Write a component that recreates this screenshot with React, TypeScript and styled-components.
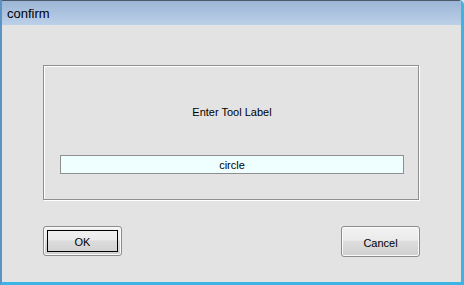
import styled, { createGlobalStyle } from 'styled-components'

const GlobalStyle = createGlobalStyle`
  html, body {
    margin: 0;
    padding: 0;
    background: #e3e3e3;
  }
  body {
    font-family: 'Liberation Sans', Arial, sans-serif;
  }
`

const App = () => {
  return (
    <>
      <GlobalStyle />
      <Window>
        <TitleBar>confirm</TitleBar>
        <Body>
          <Panel>
            <Prompt>Enter Tool Label</Prompt>
            <LabelInput defaultValue='circle' />
          </Panel>
          <ButtonRow>
            <DialogButton $default>
              <FocusRing>OK</FocusRing>
            </DialogButton>
            <DialogButton>
              <FocusRing>Cancel</FocusRing>
            </DialogButton>
          </ButtonRow>
        </Body>
      </Window>
    </>
  )
}

const Window = styled.div`
  width: 464px;
  height: 285px;
  box-sizing: border-box;
  display: flex;
  flex-direction: column;
  background: #e3e3e3;
  border-style: solid;
  border-width: 0 3px 3px 2px;
  border-color: #3cb4e4 #3cb4e4 #3cb4e4 #5b93c4;
  border-top-right-radius: 5px;
  overflow: hidden;
`

const TitleBar = styled.div`
  height: 25px;
  box-sizing: border-box;
  display: flex;
  align-items: center;
  padding: 1px 0 0 5px;
  border-top: 1px solid #4a5868;
  background: linear-gradient(to bottom, #9db6d6 0%, #b2c8e3 70%, #bcd0e8 100%);
  color: #000;
  font-size: 13px;
`

const Body = styled.div`
  flex: 1;
  display: flex;
  flex-direction: column;
  padding: 40px 42px 0 41px;
`

const Panel = styled.div`
  height: 135px;
  box-sizing: border-box;
  display: flex;
  flex-direction: column;
  align-items: flex-start;
  padding: 39px 14px 0 16px;
  border: 1px solid #8f8f8f;
  box-shadow: 1px 1px 0 #ffffff, inset 1px 1px 0 #ffffff;
`

const Prompt = styled.div`
  align-self: stretch;
  text-align: center;
  font-size: 11px;
  line-height: 14px;
  color: #000;
`

const LabelInput = styled.input`
  width: 344px;
  height: 19px;
  box-sizing: border-box;
  margin-top: 36px;
  padding: 1px 0 0;
  border: 1px solid #8f8f8f;
  background: #efffff;
  text-align: center;
  font-family: 'Liberation Sans', Arial, sans-serif;
  font-size: 11px;
  color: #000;
  outline: none;
`

const ButtonRow = styled.div`
  display: flex;
  justify-content: space-between;
  align-items: flex-start;
  margin-top: 26px;
  margin-right: -1px;
`

const DialogButton = styled.button<{ $default?: boolean }>`
  width: ${(p) => (p.$default ? '79px' : '79px')};
  height: ${(p) => (p.$default ? '30px' : '31px')};
  box-sizing: border-box;
  padding: 3px;
  border: 1px solid #8c8c8c;
  border-radius: 3px;
  background: linear-gradient(to bottom, #f2f2f2 0%, #ebebeb 45%, #dddddd 50%, #cfcfcf 100%);
  box-shadow: inset 0 0 0 1px #fafafa;
  font-family: 'Liberation Sans', Arial, sans-serif;
  font-size: 11px;
  color: #000;

  & > span {
    border-color: ${(p) => (p.$default ? '#000' : 'transparent')};
  }
`

const FocusRing = styled.span`
  display: flex;
  align-items: center;
  justify-content: center;
  height: 100%;
  box-sizing: border-box;
  padding-top: 2px;
  border: 1px solid transparent;
`

export default App
